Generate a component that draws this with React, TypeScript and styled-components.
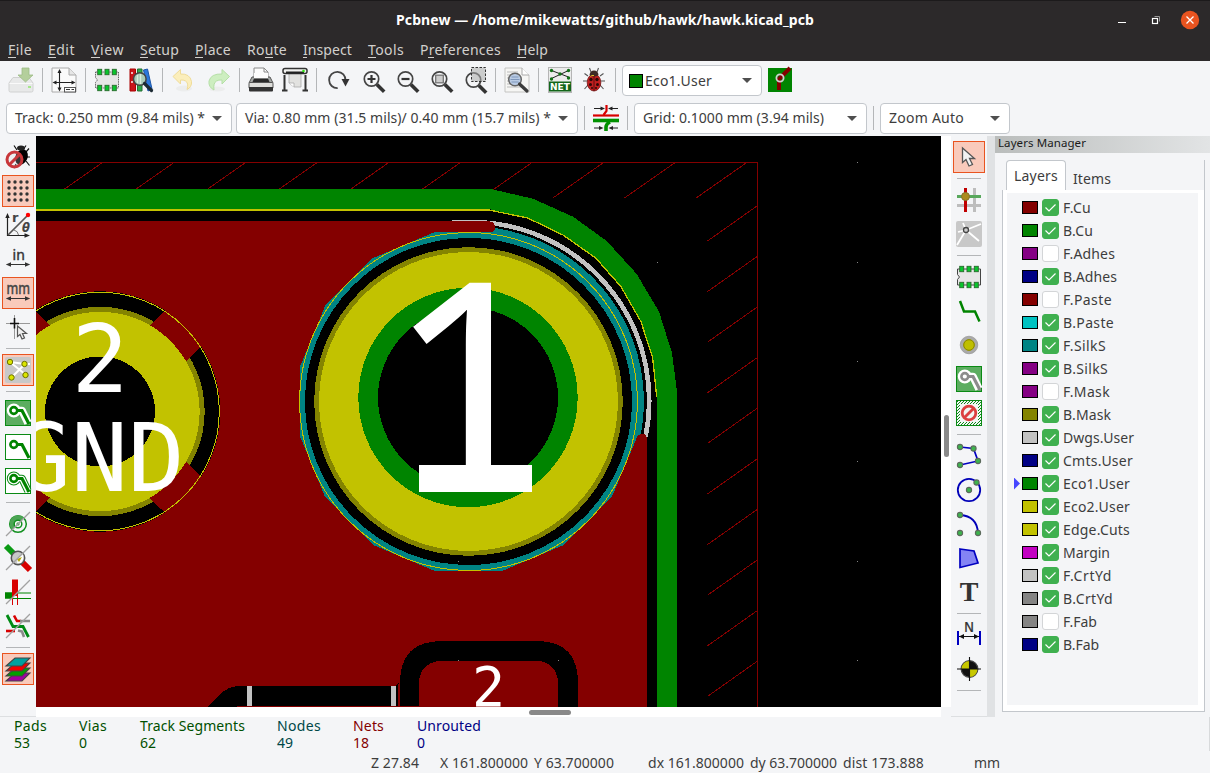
import React, { useLayoutEffect, useRef } from "react";
import styled, { createGlobalStyle } from "styled-components";

const Global = createGlobalStyle`
  * { box-sizing: border-box; }
  body { margin: 0; background: #f4f5f7; }
`;

const ui = `"Noto Sans", "Open Sans", sans-serif`;

/* ---------- text that spreads its letters over a given width ---------- */

const FitBox = styled.span<{ $w: number }>`
  display: inline-block;
  flex: none;
  width: ${(p) => p.$w}px;
  white-space: pre;
`;
const FitInner = styled.span`
  display: inline-block;
`;

function Fit({ w, children }: { w: number; children: string }) {
  const ref = useRef<HTMLSpanElement>(null);
  useLayoutEffect(() => {
    const el = ref.current;
    if (!el) return;
    el.style.letterSpacing = "0px";
    const natural = el.getBoundingClientRect().width;
    el.style.letterSpacing = `${(w - natural) / children.length}px`;
  }, [w, children]);
  return (
    <FitBox $w={w}>
      <FitInner ref={ref}>{children}</FitInner>
    </FitBox>
  );
}

/* ---------- window frame ---------- */

const Window = styled.div`
  width: 1210px;
  height: 773px;
  overflow: hidden;
  display: flex;
  flex-direction: column;
  background: #f4f5f7;
  color: #3d3d3d;
  font: 14px/20px ${ui};
`;
const TitleBar = styled.header`
  height: 38px;
  flex: none;
  display: grid;
  grid-template-columns: 1fr auto 1fr;
  align-items: center;
  background: #2c292a;
  border-top: 1px solid #1c1a1b;
  color: #fff;
  font-weight: 700;
`;
const WindowButtons = styled.div`
  display: flex;
  justify-content: flex-end;
  padding-right: 9px;
`;
const MenuBar = styled.nav`
  height: 23px;
  flex: none;
  display: flex;
  align-items: center;
  gap: 16px;
  padding-left: 8px;
  background: #2c292a;
  color: #d2d0cd;
`;
const MenuItem = styled.div<{ $w: number; $mark: number; $at: number }>`
  width: ${(p) => p.$w}px;
  height: 22px;
  line-height: 22px;
  background: linear-gradient(#d2d0cd, #d2d0cd) ${(p) => p.$at}px 18px / ${(p) => p.$mark}px 1px no-repeat;
`;

/* ---------- toolbars ---------- */

const Toolbars = styled.div`
  height: 75px;
  flex: none;
  display: flex;
  flex-direction: column;
`;
const ToolRow = styled.div<{ $h: number; $left: number }>`
  height: ${(p) => p.$h}px;
  display: flex;
  align-items: center;
  padding-left: ${(p) => p.$left}px;
`;
const ToolGroup = styled.div<{ $ml?: number }>`
  height: 34px;
  flex: none;
  display: flex;
  align-items: center;
  margin: 0 0 1px ${(p) => p.$ml ?? 0}px;
`;
const SideBar = styled.div`
  width: 36px;
  flex: none;
  height: 581px;
  padding-top: 4px;
  display: flex;
  flex-direction: column;
  align-items: center;
  border-bottom: 1px solid #dddfe1;
`;
const Cell = styled.div<{ $on?: boolean }>`
  width: ${(p) => (p.$on ? 32 : 34)}px;
  height: ${(p) => (p.$on ? 32 : 34)}px;
  margin: ${(p) => (p.$on ? "1px" : "0")};
  flex: none;
  display: flex;
  align-items: center;
  justify-content: center;
  border: ${(p) => (p.$on ? "1px solid #e95420" : "0")};
  background: ${(p) => (p.$on ? "#f9cabb" : "transparent")};
`;
const VSep = styled.div<{ $l?: number; $r?: number }>`
  width: 1px;
  height: 24px;
  flex: none;
  margin: 0 ${(p) => p.$r ?? 4}px 0 ${(p) => p.$l ?? 4}px;
  background: #b4b6b8;
`;
const HSep = styled.div`
  width: 24px;
  height: 1px;
  flex: none;
  margin: 4px 0;
  background: #b4b6b8;
`;
const Combo = styled.div<{ $w: number; $ml?: number; $pl?: number }>`
  width: ${(p) => p.$w}px;
  height: 31px;
  flex: none;
  margin-left: ${(p) => p.$ml ?? 0}px;
  padding: 0 9px 0 ${(p) => p.$pl ?? 8}px;
  display: flex;
  align-items: center;
  gap: 2px;
  background: #fff;
  border: 1px solid #c3c7cc;
  border-radius: 4px;
`;
const Arrow = styled.i`
  margin-left: auto;
  border: 5px solid transparent;
  border-bottom: 0;
  border-top-color: #4f4f4f;
`;
const Swatch = styled.i<{ $c: string; $w?: number; $h?: number }>`
  flex: none;
  width: ${(p) => p.$w ?? 16}px;
  height: ${(p) => p.$h ?? 13}px;
  background: ${(p) => p.$c};
  border: 1px solid #000;
`;

/* ---------- main area ---------- */

const Main = styled.main`
  height: 581px;
  flex: none;
  display: flex;
`;
const CanvasColumn = styled.div`
  width: 905px;
  flex: none;
`;
const Board = styled.svg`
  display: block;
`;
const HScroll = styled.div`
  height: 10px;
  padding: 3px 0 0 493px;
  background: #fff;
`;
const VScroll = styled.div`
  width: 10px;
  height: 571px;
  flex: none;
  padding: 279px 0 0 3px;
  background: #fff;
`;
const Thumb = styled.div<{ $w: number; $h: number }>`
  width: ${(p) => p.$w}px;
  height: ${(p) => p.$h}px;
  border-radius: 3px;
  background: #898989;
`;
const Sash = styled.div`
  width: 8px;
  flex: none;
  background: #e0e2e4;
`;
const Panel = styled.aside`
  width: 215px;
  flex: none;
  height: 581px;
  display: flex;
  flex-direction: column;
`;
const Caption = styled.div`
  height: 17px;
  flex: none;
  padding-left: 3px;
  background: linear-gradient(90deg, #babdbc, #e2e4e5);
  color: #1a1a1a;
  font: 11.5px/14px ${ui};
`;
const Tabs = styled.div`
  height: 38px;
  flex: none;
  margin: 7px 5px 0 7px;
  display: flex;
  align-items: flex-end;
  border-right: 1px solid #c3c7cc;
  background: linear-gradient(#c3c7cc, #c3c7cc) 0 30px / 100% 1px no-repeat;
`;
const Tab = styled.div<{ $on?: boolean }>`
  height: ${(p) => (p.$on ? 31 : 30)}px;
  align-self: flex-start;
  padding: ${(p) => (p.$on ? "5px 7px" : "9px 7px 0")};
  margin-left: ${(p) => (p.$on ? 4 : 0)}px;
  ${(p) =>
    p.$on &&
    `border: 1px solid #c3c7cc; border-bottom-color: #fff; border-radius: 4px 4px 0 0; background: #fff;`}
`;
const Page = styled.div`
  flex: none;
  height: 522px;
  margin: -8px 5px 0 7px;
  padding: 3px 6px 6px 4px;
  border: 1px solid #c3c7cc;
  border-top: 0;
  background: #fff;
`;
const LayerList = styled.div`
  height: 512px;
  padding-top: 3px;
  background: #f4f5f7;
`;
const LayerRow = styled.div`
  height: 23px;
  display: flex;
  align-items: center;
  padding-left: 5px;
`;
const Marker = styled.i<{ $on: boolean }>`
  width: 10px;
  height: 12px;
  flex: none;
  background: ${(p) => (p.$on ? "#4646ff" : "transparent")};
  clip-path: polygon(20% 0, 80% 50%, 20% 100%);
`;
const Check = styled.span<{ $on: boolean }>`
  width: 17px;
  height: 17px;
  flex: none;
  margin: 0 4px 0 4px;
  border-radius: 3px;
  border: 1px solid ${(p) => (p.$on ? "#3fb04f" : "#d3d5d7")};
  background: ${(p) => (p.$on ? "#3fb04f" : "#fff")};
  display: flex;
  align-items: center;
  justify-content: center;
`;

/* ---------- status area ---------- */

const Status = styled.footer`
  height: 56px;
  flex: none;
  display: flex;
  flex-direction: column;
  justify-content: space-between;
`;
const Info = styled.div`
  height: 34px;
  display: flex;
  padding-left: 14px;
  border-right: 1px solid #d8dadc;
`;
const InfoItem = styled.div<{ $w: number; $c: string }>`
  width: ${(p) => p.$w}px;
  flex: none;
  color: ${(p) => p.$c};
  line-height: 17px;
  display: flex;
  flex-direction: column;
`;
const Coords = styled.div`
  height: 19px;
  display: flex;
  padding-left: 371px;
  line-height: 18px;
`;
const CoordItem = styled.div<{ $w: number }>`
  width: ${(p) => p.$w}px;
  flex: none;
`;

/* ---------- icons ---------- */

const IconSvg = styled.svg`
  flex: none;
  overflow: visible;
`;
const Svg = ({ children }: { children: React.ReactNode }) => (
  <IconSvg width="26" height="26" viewBox="0 0 26 26" fill="none">
    {children}
  </IconSvg>
);

const Lens = ({ x = 11.5, y = 11.5, r = 7.2 }: { x?: number; y?: number; r?: number }) => (
  <>
    <path d={`M${x + r * 0.75} ${y + r * 0.75} L${x + r + 5.5} ${y + r + 5.5}`} stroke="#333" strokeWidth="3.6" />
    <circle cx={x} cy={y} r={r} fill="#f4f5f7" fillOpacity=".6" stroke="#454545" strokeWidth="1.7" />
  </>
);

const Chip = ({ dark = false }: { dark?: boolean }) => (
  <Svg>
    <path d="M1.5 5H24.5V21H1.5V15.5L3.5 13L1.5 10.5Z" fill="#e6e6e6" stroke={dark ? "#444" : "#666"} strokeWidth="1" strokeDasharray={dark ? "none" : "1.5 .8"} />
    {[5.7, 13, 20.3].map((x) => (
      <g key={x} fill="#09c52d" stroke="#286a2c" strokeWidth=".9">
        <rect x={x - 2} y="2.3" width="4" height="5.4" />
        <rect x={x - 2} y="18.3" width="4" height="5.4" />
      </g>
    ))}
  </Svg>
);

const Zone = ({ bg, track, halo }: { bg: string; track: string; halo?: boolean }) => (
  <Svg>
    <rect x=".5" y=".5" width="25" height="25" fill={bg} stroke="#0a8a14" strokeWidth="1" />
    {halo && (
      <g stroke={bg === "#fff" ? "#0a8a14" : "#fff"} strokeLinejoin="round">
        <path d="M9 10.5H17L23 23" strokeWidth="7.6" />
        <circle cx="8.8" cy="10.5" r="3.4" strokeWidth="7.2" />
        {bg === "#fff" && (
          <>
            <path d="M9 10.5H17L23 23" strokeWidth="5.6" stroke="#fff" />
            <circle cx="8.8" cy="10.5" r="3.4" strokeWidth="5.2" stroke="#fff" />
          </>
        )}
      </g>
    )}
    <path d="M9 10.5H17L24 24" stroke={track} strokeWidth="3.2" />
    <circle cx="8.8" cy="10.5" r="3.4" fill="#fff" stroke={track} strokeWidth="2.6" />
  </Svg>
);

const Slash = () => <path d="M1 25L25 1" stroke="#a2a2a2" strokeWidth="1.3" />;
const Node = ({ x, y }: { x: number; y: number }) => (
  <circle cx={x} cy={y} r="2.6" fill="#3cb44c" stroke="#5c6a5c" strokeWidth="1.1" />
);

const icons: Record<string, React.ReactNode> = {
  save: (
    <Svg>
      <path d="M1 16L5 10.5H21L25 16V23.5Q25 25 23.5 25H2.5Q1 25 1 23.5Z" fill="#e8e9e9" stroke="#d0d1d1" />
      <path d="M1.5 16.5H24.5" stroke="#fafafa" />
      <rect x="20" y="19" width="3" height="2" fill="#a6e78c" />
      <path d="M14 1H21V8H25L17.5 15L10 8H14Z" fill="#b4cf9c" stroke="#9dbb86" strokeWidth=".8" />
    </Svg>
  ),
  page: (
    <Svg>
      <path d="M1 1H18L25 8V25H1Z" fill="#fbfbfb" stroke="#aaa" />
      <path d="M18 1V8H25" fill="#e6e6e6" stroke="#aaa" />
      <path d="M8.5 4V23M3 15.5H23" stroke="#222" strokeWidth="1.1" />
      <path d="M8.5 2L10.5 6H6.5ZM8.5 24.5L10.5 20.5H6.5ZM1.5 15.5L5.5 13.5V17.5ZM24.5 15.5L20.5 13.5V17.5Z" fill="#222" />
      <rect x="13.5" y="20.5" width="11" height="4.5" fill="#fff" stroke="#555" />
      <path d="M15 22.5H19M20.5 22.5H23" stroke="#333" />
    </Svg>
  ),
  chip: <Chip />,
  chipDark: <Chip dark />,
  library: (
    <Svg>
      <path d="M2 2H7.5V24H2Z" fill="#c8141a" stroke="#a00" />
      <path d="M9.5 2H14V24H9.5Z" fill="#2fa84c" stroke="#226e33" />
      <path d="M15.5 3L19.5 2L24 22L20 24Z" fill="#2c78dc" stroke="#1d56a8" />
      <path d="M4 5V20" stroke="#fff" strokeWidth="1.4" strokeDasharray="2 7" />
      <circle cx="11.8" cy="12" r="6.3" fill="#a9cbb8" stroke="#444" strokeWidth="1.5" />
      <path d="M9.5 8V16M12.5 7V17" stroke="#d8eedd" strokeWidth="1.4" />
      <path d="M16.5 16.5L23.5 23.5" stroke="#1c2a33" strokeWidth="3.2" strokeLinecap="round" />
    </Svg>
  ),
  undo: (
    <Svg>
      <ellipse cx="13" cy="21.5" rx="8" ry="3" fill="#eceded" />
      <path d="M2 9.5L9.5 2.5V7Q19 6.5 20.5 14.5Q21 20 16 22.5Q18 16 14.5 14Q12.5 12.7 9.5 13V17Z" fill="#fbeebb" stroke="#f0dc98" />
    </Svg>
  ),
  redo: (
    <Svg>
      <ellipse cx="12" cy="22" rx="8" ry="2.5" fill="#eceded" />
      <path d="M24.5 9.5L17 2.5V7Q6 6.5 4 14Q3.2 20 9 23Q8 16 11.5 14Q13.5 12.7 17 13V17Z" fill="#cdeec0" stroke="#b5dfa6" />
    </Svg>
  ),
  print: (
    <Svg>
      <path d="M6 1H16L20 5V13H6Z" fill="#fdfdfd" stroke="#8a8a8a" />
      <path d="M16 1V5H20" stroke="#8a8a8a" />
      <path d="M4 10H22L25 16H1Z" fill="#a5a8a6" stroke="#555" />
      <path d="M6 6H20V11.5H6Z" fill="#fdfdfd" />
      <path d="M6 11.5H20L21.5 15H4.5Z" fill="#2a2a2a" />
      <rect x="1" y="15.5" width="24" height="6" rx="1" fill="#dededb" stroke="#555" />
      <path d="M1 20H25V23.5Q25 24.5 24 24.5H2Q1 24.5 1 23.5Z" fill="#333" />
    </Svg>
  ),
  plot: (
    <Svg>
      <path d="M2.5 8V24M23.5 8V24" stroke="#333" strokeWidth="2" />
      <path d="M0 23.5H5.5M20.5 23.5H26" stroke="#333" strokeWidth="2" />
      <path d="M7 6H19V20H12L7 16Z" fill="#e2e2e0" stroke="#aaa" strokeWidth=".8" />
      <path d="M7 16H12V20" fill="#fff" stroke="#aaa" strokeWidth=".8" />
      <rect x="1" y="1.5" width="24" height="5" rx="2" fill="#f2f2f0" stroke="#333" strokeWidth="1.5" />
      <path d="M4 5.5H22" stroke="#222" strokeWidth="2" />
      <circle cx="21.5" cy="4" r="1.3" fill="#2ee012" />
    </Svg>
  ),
  refresh: (
    <Svg>
      <path d="M12.7 21.2A8.2 8.2 0 1 1 20.5 13.5" stroke="#454545" strokeWidth="1.8" />
      <path d="M16.5 12H24.5L20.5 19.5Z" fill="#333" />
    </Svg>
  ),
  zoomIn: (
    <Svg>
      <Lens x={12.5} y={12} />
      <path d="M8.5 12H16.5M12.5 8V16" stroke="#333" strokeWidth="2.2" />
    </Svg>
  ),
  zoomOut: (
    <Svg>
      <Lens x={12.5} y={12} />
      <path d="M8.5 12H16.5" stroke="#333" strokeWidth="2.2" />
    </Svg>
  ),
  zoomFit: (
    <Svg>
      <Lens x={12.5} y={12} />
      <rect x="8.7" y="8.2" width="7.6" height="7.6" fill="#ccc" stroke="#777" strokeWidth="1.3" />
    </Svg>
  ),
  zoomArea: (
    <Svg>
      <Lens x={12.5} y={13} />
      <rect x="10.5" y=".5" width="14" height="14" fill="#aaa" fillOpacity=".55" stroke="#333" strokeDasharray="2.5 1.5" />
    </Svg>
  ),
  find: (
    <Svg>
      <path d="M1 1H18L25 8V25H1Z" fill="#f6f6f4" stroke="#c4c4c2" />
      <path d="M18 1V8H25" fill="#fff" stroke="#aaa" />
      <path d="M3 5H14M3 8H14M3 11H10M3 14H10M3 17H10M3 20H18" stroke="#bbb" />
      <circle cx="11" cy="12.5" r="6.3" fill="#b9cbe4" stroke="#666" strokeWidth="1.5" />
      <path d="M7.5 10H14.5M6.5 12.5H15.5M7.5 15H14.5" stroke="#7f97bb" />
      <path d="M15.5 17L23 24" stroke="#3c3c3c" strokeWidth="3.2" strokeLinecap="round" />
    </Svg>
  ),
  net: (
    <Svg>
      <rect x="1.5" y=".5" width="23" height="25" fill="#ececec" stroke="#b5b5b5" />
      <path d="M4.5 3.5L21.5 10M21.5 3.5L4.5 11.5" stroke="#222" />
      <g fill="#137018">
        <circle cx="4.5" cy="3.5" r="1.7" />
        <circle cx="21.5" cy="3.5" r="1.7" />
        <circle cx="13" cy="7" r="1.7" />
        <circle cx="4.5" cy="12" r="1.7" />
        <circle cx="21.5" cy="11" r="1.7" />
      </g>
      <rect x="2" y="14.5" width="22" height="10" fill="#13661a" />
      <text x="3" y="23" fontFamily="DejaVu Sans" fontSize="9" fontWeight="700" textLength="20" lengthAdjust="spacingAndGlyphs" fill="#fff">NET</text>
    </Svg>
  ),
  ladybug: (
    <Svg>
      <path d="M7 9L3.5 6.5M6 14H2M7 18L3.5 22M19 9L22.5 6.5M20 14H24M19 18L22.5 22M10 5L8.5 1M16 5L17.5 1" stroke="#555" strokeWidth="1.1" />
      <ellipse cx="13" cy="15.5" rx="6.8" ry="8.5" fill="#c01f1f" stroke="#741010" strokeWidth=".8" />
      <path d="M8.5 8Q13 11 17.5 8Q17 3.5 13 3.5Q9 3.5 8.5 8Z" fill="#3d2b26" />
      <path d="M13 9V24" stroke="#5c0f0f" />
      <g fill="#2c0808">
        <circle cx="10" cy="12.5" r="1.7" />
        <circle cx="16" cy="12.5" r="1.7" />
        <circle cx="9.5" cy="17.5" r="1.5" />
        <circle cx="16.5" cy="17.5" r="1.5" />
        <circle cx="11" cy="21" r="1" />
        <circle cx="15" cy="21" r="1" />
      </g>
      <path d="M9.5 9.5Q10.5 8 13 8.5" stroke="#d9c22e" />
    </Svg>
  ),
  layerPair: (
    <Svg>
      <rect x="1" y="1" width="24" height="24" fill="#008400" />
      <path d="M12 23V12L23 1" stroke="#840000" strokeWidth="4" />
      <circle cx="13" cy="11" r="3.6" stroke="#d0d0d0" strokeWidth="1.8" />
    </Svg>
  ),
  trackWidth: (
    <Svg>
      <path d="M0 10.5H26" stroke="#d80000" strokeWidth="2.2" />
      <path d="M13.5 0V6L10.5 10" stroke="#d80000" strokeWidth="2.2" />
      <path d="M0 15.5H26" stroke="#009000" strokeWidth="3.6" />
      <path d="M17 17Q13 19 13 22V26" stroke="#009000" strokeWidth="3.6" />
      <path d="M1 3.5H9M17 3.5H25M1 23H8M18 23H25" stroke="#222" />
      <path d="M12 3.5L7.5 1.5V5.5ZM15 3.5L19.5 1.5V5.5ZM10.5 23L6 21V25ZM15.5 23L20 21V25Z" fill="#222" />
    </Svg>
  ),
  drc: (
    <Svg>
      <path d="M12 6L9 1.5M18 6L21 1.5M21 8L24 4.5M21 13H25M21 17L24.5 21.5M11 20L9 24" stroke="#111" strokeWidth="1.2" />
      <ellipse cx="16.5" cy="13" rx="6" ry="8" transform="rotate(25 16.5 13)" fill="#000" />
      <ellipse cx="16" cy="4" rx="4" ry="2.5" fill="#222" />
      <circle cx="9.5" cy="15.5" r="7.5" fill="#d8d8d8" fillOpacity=".25" stroke="#c8363a" strokeWidth="3" />
      <path d="M4.5 20.5L14.5 10.5" stroke="#c8363a" strokeWidth="3" />
    </Svg>
  ),
  grid: (
    <Svg>
      {[4, 10, 16, 22].map((y) => [4, 10, 16, 22].map((x) => <circle key={`${x}-${y}`} cx={x} cy={y} r="1.7" fill="#333" />))}
    </Svg>
  ),
  polar: (
    <Svg>
      <path d="M2.5 24V4M2 23.5H21" stroke="#222" strokeWidth="1.2" />
      <path d="M2.5 1L4.7 6H.3ZM25 23.5L19.5 21.3V25.7Z" fill="#222" />
      <path d="M3 23L22 4" stroke="#555" strokeWidth="1.7" />
      <circle cx="23" cy="3" r="2.2" fill="#f00" />
      <path d="M9 18Q13 19 13.5 23" stroke="#777" />
      <text x="7" y="9.5" fontFamily="DejaVu Sans" fontSize="13" fontWeight="700" fill="#444">r</text>
      <text x="17" y="19.5" fontFamily="DejaVu Sans" fontSize="11.5" fontWeight="700" fontStyle="italic" fill="#444">θ</text>
    </Svg>
  ),
  inch: (
    <Svg>
      <text x="7.5" y="13.5" fontFamily="Noto Sans" fontSize="14" textLength="12.5" fill="#333" stroke="#333" strokeWidth=".4">in</text>
      <path d="M3 18.5H23" stroke="#333" />
      <path d="M.8 18.5L6 16.2V20.8ZM25.2 18.5L20 16.2V20.8Z" fill="#333" />
    </Svg>
  ),
  mm: (
    <Svg>
      <text x="1.5" y="13.5" fontFamily="Noto Sans" fontSize="15.5" textLength="23.5" lengthAdjust="spacingAndGlyphs" fill="#444" stroke="#444" strokeWidth=".5">mm</text>
      <path d="M3 18.5H23" stroke="#333" />
      <path d="M.8 18.5L6 16.2V20.8ZM25.2 18.5L20 16.2V20.8Z" fill="#333" />
    </Svg>
  ),
  cursor: (
    <Svg>
      <path d="M1 9.5H7M12 9.5H25M9.5 1V5M9.5 14V25" stroke="#999" />
      <path d="M5 9.5H14M9.5 4V14.5" stroke="#111" strokeWidth="1.6" />
      <path d="M12.5 12V22.5L15 20.5L17 25L19.5 24L17.5 19.5H21.5Z" fill="#f0f0f0" stroke="#555" strokeWidth="1.2" />
    </Svg>
  ),
  ratsnest: (
    <Svg>
      <rect width="26" height="26" rx="2" fill="#c8c8c8" />
      <path d="M5 5L20 7H25M5 5L21 18M20 7L7 20" stroke="#fff" strokeWidth="2" />
      {[[5, 5], [19.5, 7], [20.5, 18], [6.5, 20.5]].map(([x, y]) => (
        <circle key={x} cx={x} cy={y} r="2.7" fill="#dbe600" stroke="#6c7000" />
      ))}
    </Svg>
  ),
  zoneFill: <Zone bg="#5cad60" track="#008400" halo />,
  zoneOff: <Zone bg="#ffffff" track="#008400" />,
  zoneOutline: <Zone bg="#fff" track="#008400" halo />,
  padSketch: (
    <Svg>
      <circle cx="13" cy="13" r="8.3" stroke="#129020" strokeWidth="1.5" />
      <path d="M4.7 13A8.3 8.3 0 0 1 19 7L7 19Q4.7 16 4.7 13Z" fill="#4ca454" />
      <circle cx="13" cy="13" r="3.8" fill="#fff" stroke="#129020" strokeWidth="1.5" />
      <circle cx="13" cy="13" r="1.7" fill="#4ca454" />
      <Slash />
    </Svg>
  ),
  viaSketch: (
    <Svg>
      <path d="M1 1L9 9" stroke="#0a9a14" strokeWidth="6" />
      <path d="M14 14L25 25" stroke="#d80000" strokeWidth="6" />
      <circle cx="13" cy="13" r="6.7" fill="#c9c9c9" stroke="#555" strokeWidth="1.5" />
      <path d="M13 13L18 9Q19.5 14 16 18L12 18Z" fill="#fff" />
      <path d="M12 14L17 12L14 17Z" fill="#b5a800" />
      <Slash />
    </Svg>
  ),
  trackSketch: (
    <Svg>
      <path d="M0 16.5H8" stroke="#008400" strokeWidth="6.5" />
      <path d="M10 .5V17" stroke="#d80000" strokeWidth="6" />
      <path d="M7.5 16V26M12.5 14V26" stroke="#d80000" />
      <path d="M13 14H26M8 19.5H26" stroke="#008400" />
      <Slash />
    </Svg>
  ),
  contrast: (
    <Svg>
      <path d="M2 2L8 13.500H18L23.500 24" stroke="#008a14" strokeWidth="2.8" />
      <path d="M9 2.500L12 8H16" stroke="#d80000" strokeWidth="2.6" />
      <path d="M15 8H25M13 17.500L17 18.500L19 24" stroke="#8a8a8a" strokeWidth="2.6" />
      <path d="M1 18H10" stroke="#d80000" strokeWidth="2.6" />
      <Slash />
    </Svg>
  ),
  layers: (
    <Svg>
      {["#a000a0", "#00a000", "#f00000", "#00a0a0"].map((c, i) => (
        <path key={c} d={`M1 ${25 - i * 5}L10 ${17 - i * 5}H25L17 ${25 - i * 5}Z`} fill={c} stroke="#444" strokeWidth="1.1" />
      ))}
    </Svg>
  ),
  pointer: (
    <Svg>
      <path d="M6.5 4V18.500L10 15.500L13 22L16.500 20.500L13.500 14.500H18.500Z" fill="#f2f2f2" stroke="#555" strokeWidth="1.3" />
    </Svg>
  ),
  highlightNet: (
    <Svg>
      <path d="M18.500 1V25M1 18.500H25" stroke="#bdbdbd" strokeWidth="3" />
      <path d="M9.500 1V25" stroke="#c00000" strokeWidth="3" />
      <path d="M1 9.500H25" stroke="#58a85c" strokeWidth="3" />
      <circle cx="9.5" cy="9.5" r="4" fill="#ab8a1c" stroke="#85722c" />
    </Svg>
  ),
  localRats: (
    <Svg>
      <rect width="26" height="26" rx="2" fill="#c8c8c8" />
      <path d="M10 9L7 2M10 9L25 3M10 9L1 24M10 9L23 20M10 9L2 11" stroke="#fff" strokeWidth="1.8" />
      <circle cx="10" cy="9" r="2.5" fill="#ccc" stroke="#444" strokeWidth="1.3" />
    </Svg>
  ),
  route: (
    <Svg>
      <path d="M4 3L8 13.500H19L23.500 23.500" stroke="#008400" strokeWidth="2.5" />
    </Svg>
  ),
  via: (
    <Svg>
      <circle cx="13" cy="13" r="7.2" fill="#bfbf00" stroke="#aaa" strokeWidth="3" />
      <circle cx="13" cy="13" r="8.8" stroke="#888" strokeWidth=".6" />
      <circle cx="13" cy="13" r="5.3" stroke="#888400" strokeWidth="1" />
    </Svg>
  ),
  addZone: <Zone bg="#5cad60" track="#8c8c8c" halo />,
  keepout: (
    <Svg>
      <defs>
        <pattern id="ko" width="3" height="3" patternUnits="userSpaceOnUse">
          <path d="M-1 1L1 -1M0 3L3 0M2 4L4 2" stroke="#0a8a14" />
        </pattern>
      </defs>
      <rect x=".5" y=".5" width="25" height="25" fill="url(#ko)" stroke="#0a8a14" />
      <rect x="4" y="4" width="18" height="18" fill="#f2f5f2" />
      <circle cx="13" cy="13" r="6.8" stroke="#dc4040" strokeWidth="2.8" />
      <path d="M8.500 17.500L17.500 8.500" stroke="#dc4040" strokeWidth="2.8" />
    </Svg>
  ),
  line: (
    <Svg>
      <path d="M4 4L17.500 5.500L22 18L4 22" stroke="#0000c0" strokeWidth="1.7" />
      <Node x={4} y={4} />
      <Node x={17.5} y={5.5} />
      <Node x={22} y={18} />
      <Node x={4} y={22} />
    </Svg>
  ),
  circle: (
    <Svg>
      <circle cx="13" cy="13" r="11.2" stroke="#0000b8" strokeWidth="1.8" />
      <Node x={13} y={13} />
      <Node x={20.5} y={5.5} />
    </Svg>
  ),
  arc: (
    <Svg>
      <path d="M4 4Q21 5 22 22" stroke="#0000b8" strokeWidth="1.8" />
      <Node x={4} y={4} />
      <Node x={4} y={22} />
      <Node x={22} y={22} />
    </Svg>
  ),
  polygon: (
    <Svg>
      <path d="M4 4L18 6L22 18L4 22.500Z" fill="#8484f4" stroke="#0000c0" strokeWidth="1.7" />
    </Svg>
  ),
  text: (
    <Svg>
      <text x="13" y="22" textAnchor="middle" fontFamily="Liberation Serif" fontWeight="700" fontSize="28" fill="#333">T</text>
    </Svg>
  ),
  dimension: (
    <Svg>
      <text x="13" y="9.500" textAnchor="middle" fontFamily="DejaVu Sans" fontSize="13.5" fill="#333" stroke="#333" strokeWidth=".2">N</text>
      <path d="M2 9V23M24 9V23" stroke="#0000c0" strokeWidth="2" />
      <path d="M3 14.500H23" stroke="#111" />
      <path d="M3 14.500L8 12V17ZM23 14.500L18 12V17Z" fill="#111" />
    </Svg>
  ),
  target: (
    <Svg>
      <circle cx="13.5" cy="13" r="8.3" fill="#111" stroke="#444" strokeWidth="1.3" />
      <path d="M13.500 13V5A8 8 0 0 0 5.500 13ZM13.500 13V21A8 8 0 0 0 21.500 13Z" fill="#c8c800" />
      <path d="M13.500 1V25M1 13H25" stroke="#111" strokeWidth="1.1" />
    </Svg>
  ),
};

/* a name is an icon, "name*" a pressed one, "|" a separator */
const leftTools = "drc grid* polar inch mm* cursor | ratsnest* | zoneFill zoneOff zoneOutline | padSketch viaSketch trackSketch contrast | layers*";
const rightTools = "pointer* | highlightNet localRats | chipDark route via addZone keepout | line circle arc polygon text | dimension target |";
const topTools = "save | page | chip library | undo redo | print plot | refresh zoomIn zoomOut zoomFit zoomArea | find | net ladybug |";

const Tools = ({ list, side }: { list: string; side?: boolean }) => (
  <>
    {list.split(" ").map((t, i) =>
      t === "|" ? (
        side ? <HSep key={i} /> : <VSep key={i} />
      ) : (
        <Cell key={i} $on={t.endsWith("*")}>
          {icons[t.replace("*", "")]}
        </Cell>
      )
    )}
  </>
);

/* ---------- board drawing ---------- */

const mono = `"DejaVu Sans Mono", monospace`;
const topHatch = Array.from({ length: 10 }, (_, k) => 101.7 + 71.6 * k);
const sideHatch = Array.from({ length: 10 }, (_, k) => 206 + 50.6 * k);
const dots = [[857, 162], [857, 262], [857, 361], [857, 461], [857, 561], [857, 660], [657, 262], [458, 561], [458, 660], [558, 660]];

const BoardView = () => (
  <Board width="905" height="571" viewBox="36 136 905 571" fill="none" shapeRendering="crispEdges">
    <rect x="36" y="136" width="905" height="571" fill="#000" />
    <g stroke="#840000">
      <path d="M36 162.500H757.500V707" />
      {topHatch.map((x) => <path key={x} d={`M${x} 163L${x - 50} 198`} />)}
      {sideHatch.map((y) => <path key={y} d={`M757 ${y}L707.500 ${y + 35}`} />)}
    </g>
    <path
      fill="#008400"
      d="M36 189H490.700L533 198.700L573 216.700L606.700 241L636.700 274L659 311.700L672 353L677 391.700V707H657V397L652.700 358L641 321.700L621 286.700L595.700 258L563 235L527.700 218L489 209H36Z"
    />
    <path d="M36 210H489" stroke="#c2c200" strokeWidth="2" />
    <path d="M489 210L527.700 218L563 235L595.700 258L621 286.700L641 321.700L652.700 358L656.700 397" stroke="#c2c200" strokeWidth="1.3" />

    <circle cx="468.5" cy="401.5" r="169.5" stroke="#008484" strokeWidth="12" />
    <path d="M452 220.500H487" stroke="#c2c2c2" />
    <path d="M490 223A178.800 178.800 0 0 1 645.500 437" stroke="#c2c2c2" strokeWidth="4.6" />
    <path
      fill="#840000"
      d="M36 221H488L493 222.500L495.500 226L495 229.500L492 232H434.900L372.800 258.200L325.200 305.800L299.500 367.900V435.100L325.200 497.200L372.800 544.800L434.900 571H502.100L564.200 544.800L611.800 497.200L637.500 436L641 434L645 434.500L647 438V707H36Z"
    />
    <circle cx="468.5" cy="401.5" r="169" stroke="#c2c200" />
    <circle cx="468.5" cy="401.5" r="154.3" fill="#848400" />
    <circle cx="468.5" cy="401.5" r="149.5" fill="#c2c200" />
    <circle cx="468" cy="397.5" r="109.7" fill="#008400" />
    <circle cx="468" cy="397.5" r="90" fill="#000" />

    <circle cx="100" cy="411.5" r="120.3" fill="#000" />
    <circle cx="100" cy="411.5" r="104.7" fill="#848400" />
    <path d="M6 317.500L194 505.500M194 317.500L6 505.500" stroke="#840000" strokeWidth="51.6" />
    <circle cx="100" cy="411.5" r="99.7" fill="#c2c200" />
    <circle cx="100" cy="411.5" r="55" fill="#000" />
    <circle cx="100" cy="411.5" r="119.3" stroke="#c2c200" />

    <path d="M400 707V683Q400 641 442 641H537Q578 641 578 683V707Z" fill="#000" />
    <path d="M419 707V681Q421 664 438 661H541Q556 665 558 681V707Z" fill="#840000" />
    <path d="M208 707L220 694.500Q228 686 240 686H395L398.500 683V706H419V707Z" fill="#000" />
    <path d="M398.500 684V706M237 706.500H419" stroke="#840000" />
    <path d="M249.500 686V706M393.500 686V706" stroke="#c2c2c2" strokeWidth="5" />

    {dots.map(([x, y]) => <rect key={`${x}-${y}`} x={x} y={y} width="1" height="1" fill="#848484" />)}

    <g fill="#fff" fontFamily={mono} shapeRendering="auto">
      <text x="387" y="492" fontFamily="Noto Sans" fontSize="293">1</text>
      <rect x="419" y="465" width="113" height="27" />
      <text x="71.5" y="392" fontSize="95">2</text>
      <text x="14" y="491" fontSize="94.5">GND</text>
      <text x="472" y="706" fontSize="55">2</text>
    </g>
  </Board>
);

/* ---------- data ---------- */

const menus: [string, number, number, number][] = [
  ["File", 24, 8, 0], ["Edit", 27, 8, 0], ["View", 33, 9, 0], ["Setup", 39, 8, 0], ["Place", 36, 8, 0],
  ["Route", 40, 8, 18], ["Inspect", 49, 4, 0], ["Tools", 36, 8, 0], ["Preferences", 81, 6, 8], ["Help", 31, 9, 0],
];

const layers: [string, string, boolean, number][] = [
  ["F.Cu", "#840000", true, 28], ["B.Cu", "#008400", true, 30], ["F.Adhes", "#840084", false, 52],
  ["B.Adhes", "#000084", true, 54], ["F.Paste", "#840000", false, 49], ["B.Paste", "#00c2c2", true, 51],
  ["F.SilkS", "#008484", true, 43], ["B.SilkS", "#840084", true, 45], ["F.Mask", "#840084", false, 47],
  ["B.Mask", "#848400", true, 48], ["Dwgs.User", "#c2c2c2", true, 71], ["Cmts.User", "#000084", true, 70],
  ["Eco1.User", "#008400", true, 67], ["Eco2.User", "#c2c200", true, 67], ["Edge.Cuts", "#c2c200", true, 67],
  ["Margin", "#c200c2", true, 47], ["F.CrtYd", "#c2c2c2", true, 49], ["B.CrtYd", "#848484", true, 50],
  ["F.Fab", "#848484", false, 34], ["B.Fab", "#000084", true, 36],
];

const info: [string, number, string, number, string, number][] = [
  ["Pads", 33, "53", 16, "#005000", 65], ["Vias", 28, "0", 8, "#005000", 61], ["Track Segments", 105, "62", 16, "#005000", 137],
  ["Nodes", 44, "49", 16, "#004848", 76], ["Nets", 31, "18", 16, "#840000", 64], ["Unrouted", 64, "0", 8, "#000084", 80],
];

export default function App() {
  return (
    <Window>
      <Global />
      <TitleBar>
        <span />
        <Fit w={418}>Pcbnew — /home/mikewatts/github/hawk/hawk.kicad_pcb</Fit>
        <WindowButtons>
          <svg width="86" height="20" viewBox="1115 9 86 20" fill="none">
            <path d="M1118 21.500H1126" stroke="#fff" />
            <path d="M1154.500 15.500H1159.500V20.500" stroke="#999" />
            <rect x="1152.5" y="17.5" width="5" height="5" stroke="#fff" strokeWidth="1.2" />
            <circle cx="1190" cy="19" r="9.2" fill="#e95420" />
            <path d="M1186.500 15.500L1193.500 22.500M1193.500 15.500L1186.500 22.500" stroke="#fff" strokeWidth="1.3" />
          </svg>
        </WindowButtons>
      </TitleBar>
      <MenuBar>
        {menus.map(([name, w, mark, at]) => (
          <MenuItem key={name} $w={w} $mark={mark} $at={at}>
            <Fit w={w}>{name}</Fit>
          </MenuItem>
        ))}
      </MenuBar>
      <Toolbars>
        <ToolRow $h={39} $left={4}>
          <ToolGroup>
            <Tools list={topTools} />
          </ToolGroup>
          <Combo $w={140} $ml={2} $pl={6}>
            <Swatch $c="#008400" $w={14} $h={14} />
            <Fit w={67}>Eco1.User</Fit>
            <Arrow />
          </Combo>
          <ToolGroup $ml={1}>
            <Cell>{icons.layerPair}</Cell>
          </ToolGroup>
        </ToolRow>
        <ToolRow $h={36} $left={6}>
          <Combo $w={226}>
            <Fit w={190}>Track: 0.250 mm (9.84 mils) *</Fit>
            <Arrow />
          </Combo>
          <Combo $w={342} $ml={4}>
            <Fit w={306}>Via: 0.80 mm (31.5 mils)/ 0.40 mm (15.7 mils) *</Fit>
            <Arrow />
          </Combo>
          <VSep $l={6} $r={4} />
          <Cell>{icons.trackWidth}</Cell>
          <VSep $l={4} $r={6} />
          <Combo $w={233}>
            <Fit w={181}>Grid: 0.1000 mm (3.94 mils)</Fit>
            <Arrow />
          </Combo>
          <VSep $l={6} $r={6} />
          <Combo $w={130}>
            <Fit w={75}>Zoom Auto</Fit>
            <Arrow />
          </Combo>
        </ToolRow>
      </Toolbars>
      <Main>
        <SideBar>
          <Tools list={leftTools} side />
        </SideBar>
        <CanvasColumn>
          <BoardView />
          <HScroll>
            <Thumb $w={42} $h={5} />
          </HScroll>
        </CanvasColumn>
        <VScroll>
          <Thumb $w={5} $h={42} />
        </VScroll>
        <SideBar>
          <Tools list={rightTools} side />
        </SideBar>
        <Sash />
        <Panel>
          <Caption>
            <Fit w={88}>Layers Manager</Fit>
          </Caption>
          <Tabs>
            <Tab $on>
              <Fit w={44}>Layers</Fit>
            </Tab>
            <Tab>
              <Fit w={38}>Items</Fit>
            </Tab>
          </Tabs>
          <Page>
            <LayerList>
              {layers.map(([name, color, on, w]) => (
                <LayerRow key={name}>
                  <Marker $on={name === "Eco1.User"} />
                  <Swatch $c={color} />
                  <Check $on={on}>
                    {on && (
                      <svg width="13" height="13" viewBox="0 0 13 13" fill="none">
                        <path d="M1.500 6.500L5 10L11.500 3.500" stroke="#fff" strokeWidth="1.2" />
                      </svg>
                    )}
                  </Check>
                  <Fit w={w}>{name}</Fit>
                </LayerRow>
              ))}
            </LayerList>
          </Page>
        </Panel>
      </Main>
      <Status>
        <Info>
          {info.map(([name, w, value, vw, color, cell]) => (
            <InfoItem key={name} $w={cell} $c={color}>
              <Fit w={w}>{name}</Fit>
              <Fit w={vw}>{value}</Fit>
            </InfoItem>
          ))}
        </Info>
        <Coords>
          <CoordItem $w={69}>
            <Fit w={48}>Z 27.84</Fit>
          </CoordItem>
          <CoordItem $w={94}>
            <Fit w={88}>X 161.800000</Fit>
          </CoordItem>
          <CoordItem $w={114}>
            <Fit w={80}>Y 63.700000</Fit>
          </CoordItem>
          <CoordItem $w={102}>
            <Fit w={96}>dx 161.800000</Fit>
          </CoordItem>
          <CoordItem $w={93}>
            <Fit w={87}>dy 63.700000</Fit>
          </CoordItem>
          <CoordItem $w={131}>
            <Fit w={81}>dist 173.888</Fit>
          </CoordItem>
          <CoordItem $w={40}>
            <Fit w={26}>mm</Fit>
          </CoordItem>
        </Coords>
      </Status>
    </Window>
  );
}
